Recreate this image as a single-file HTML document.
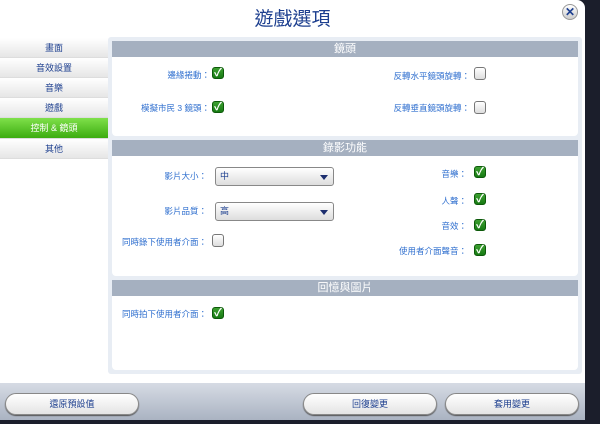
<!DOCTYPE html>
<html><head><meta charset="utf-8"><style>
*{margin:0;padding:0;box-sizing:border-box}
body{width:600px;height:424px;background:#1b1e2b;position:relative;overflow:hidden;font-family:"Liberation Sans","Noto Sans CJK TC",sans-serif}
.win{position:absolute;left:0;top:0;width:585px;height:420px;background:#fff;border-top-right-radius:8px;overflow:hidden}
.title{position:absolute;left:0;width:585px;top:4px;text-align:center;font-size:19px;color:#1d3f8f}
.close{position:absolute;left:562px;top:4px;width:16px;height:16px;border-radius:50%;background:linear-gradient(#fff,#ccc);border:1px solid #999;color:#1d3f8f;font-size:12px;font-weight:bold;text-align:center;line-height:14px}
.tab{position:absolute;left:0;width:108px;height:20px;font-size:9px;color:#1d3f8f;text-align:center;line-height:20px;background:linear-gradient(#fff,#e6e6e6);border-bottom:1px solid #ddd}
.tab.on{background:linear-gradient(#7fe04a,#3cac10);color:#fff}
.panel{position:absolute;left:108px;top:37px;width:474px;height:337px;background:#e8edf4;border-radius:3px}
.hd{position:absolute;left:112px;width:466px;height:16px;background:#a5b0c0;color:#fff;font-size:11px;text-align:center;line-height:16px}
.sec{position:absolute;left:112px;width:466px;background:#fff;border-radius:0 0 4px 4px}
.lb{position:absolute;font-size:8.5px;color:#2f6fcf;text-align:right;line-height:12px;white-space:nowrap}
.ck{position:absolute;width:12px;height:12px;border-radius:3px;background:linear-gradient(#3da030,#167a12);border:1px solid #0d5a0a;color:#fff;font-size:11px;font-weight:bold;line-height:10px;text-align:center}
.un{position:absolute;width:12px;height:13px;border-radius:3px;background:linear-gradient(#fff,#ddd);border:1px solid #777}
.dd{position:absolute;left:215px;width:119px;height:19px;border:1px solid #888;border-radius:3px;background:linear-gradient(#fff,#ddd);font-size:9px;color:#1d3f8f;padding-left:4px;line-height:17px}
.dd:after{content:"";position:absolute;right:5px;top:7px;border-left:4px solid transparent;border-right:4px solid transparent;border-top:5px solid #1d2f6f}
.bot{position:absolute;left:0;top:383px;width:585px;height:37px;background:linear-gradient(#d6dbe4,#aab3c2)}
.btn{position:absolute;top:393px;height:22px;border-radius:11px;background:linear-gradient(#fff,#e4e4e4);border:1px solid #888;box-shadow:0 1px 1px #555;font-size:9px;color:#1d3f8f;text-align:center;line-height:20px}
</style></head><body>
<div class="win">
<div class="title">遊戲選項</div>
<div class="close">✕</div>
<div class="tab" style="top:38px">畫面</div>
<div class="tab" style="top:58px">音效設置</div>
<div class="tab" style="top:78px">音樂</div>
<div class="tab" style="top:98px">遊戲</div>
<div class="tab on" style="top:118px;height:21px;line-height:21px">控制 &amp; 鏡頭</div>
<div class="tab" style="top:139px">其他</div>
<div class="panel"></div>
<div class="hd" style="top:41px">鏡頭</div>
<div class="sec" style="top:57px;height:79px"></div>
<div class="lb" style="right:375px;top:69px">邊緣捲動：</div><div class="ck" style="left:212px;top:67px">✓</div>
<div class="lb" style="right:375px;top:102px">模擬市民 3 鏡頭：</div><div class="ck" style="left:212px;top:101px">✓</div>
<div class="lb" style="right:115px;top:70px">反轉水平鏡頭旋轉：</div><div class="un" style="left:474px;top:67px"></div>
<div class="lb" style="right:115px;top:102px">反轉垂直鏡頭旋轉：</div><div class="un" style="left:474px;top:101px"></div>
<div class="hd" style="top:140px">錄影功能</div>
<div class="sec" style="top:156px;height:120px"></div>
<div class="lb" style="right:378px;top:170px">影片大小：</div><div class="dd" style="top:167px">中</div>
<div class="lb" style="right:378px;top:205px">影片品質：</div><div class="dd" style="top:202px">高</div>
<div class="lb" style="right:378px;top:236px">同時錄下使用者介面：</div><div class="un" style="left:212px;top:234px"></div>
<div class="lb" style="right:118px;top:168px">音樂：</div><div class="ck" style="left:474px;top:166px">✓</div>
<div class="lb" style="right:118px;top:195px">人聲：</div><div class="ck" style="left:474px;top:193px">✓</div>
<div class="lb" style="right:118px;top:220px">音效：</div><div class="ck" style="left:474px;top:219px">✓</div>
<div class="lb" style="right:118px;top:245px">使用者介面聲音：</div><div class="ck" style="left:474px;top:244px">✓</div>
<div class="hd" style="top:280px">回憶與圖片</div>
<div class="sec" style="top:296px;height:74px"></div>
<div class="lb" style="right:378px;top:308px">同時拍下使用者介面：</div><div class="ck" style="left:212px;top:307px">✓</div>
<div class="bot"></div>
<div class="btn" style="left:5px;width:134px">還原預設值</div>
<div class="btn" style="left:303px;width:134px">回復變更</div>
<div class="btn" style="left:445px;width:134px">套用變更</div>
</div>
</body></html>
